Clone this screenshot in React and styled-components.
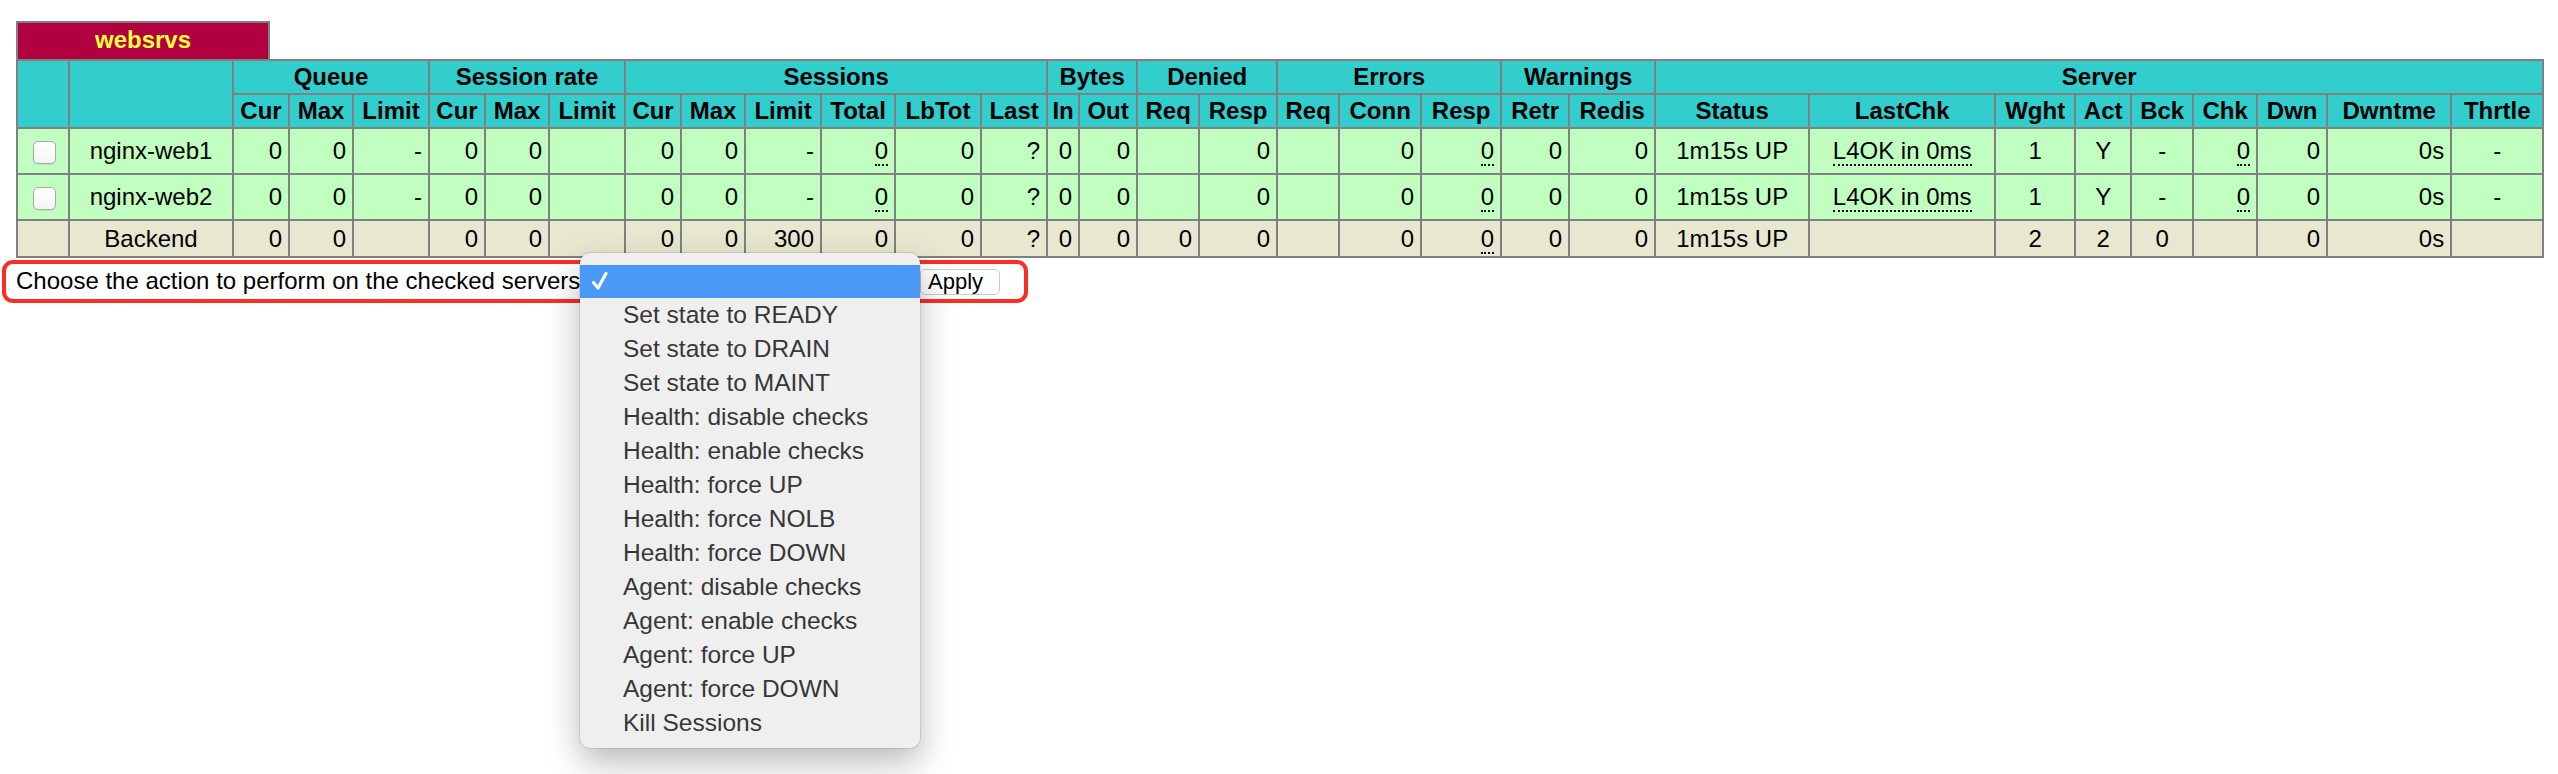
import React from "react";
import styled, { createGlobalStyle } from "styled-components";

const GlobalStyle = createGlobalStyle`
  body {
    margin: 0;
    background: #fff;
    color: #000;
    font-family: "Liberation Sans", Arial, Helvetica, sans-serif;
  }
`;

// column widths measured off the stats page (2x)
const COLS = [52, 164, 56, 64, 76, 56, 64, 76, 56, 64, 76, 74, 86, 66, 32, 58, 62, 78, 62, 82, 80, 68, 86, 154, 186, 80, 56, 62, 64, 70, 124, 92];

// per column alignment, haproxy "ac" cells are centered
const ALIGN = COLS.map((_, i) => {
    if (i <= 1) return "center";
    if ([23, 24, 25, 26, 27, 31].includes(i)) return "center";
    return "right";
});

const GROUPS = [
    { title: "Queue", cols: ["Cur", "Max", "Limit"] },
    { title: "Session rate", cols: ["Cur", "Max", "Limit"] },
    { title: "Sessions", cols: ["Cur", "Max", "Limit", "Total", "LbTot", "Last"] },
    { title: "Bytes", cols: ["In", "Out"] },
    { title: "Denied", cols: ["Req", "Resp"] },
    { title: "Errors", cols: ["Req", "Conn", "Resp"] },
    { title: "Warnings", cols: ["Retr", "Redis"] },
    { title: "Server", cols: ["Status", "LastChk", "Wght", "Act", "Bck", "Chk", "Dwn", "Dwntme", "Thrtle"] }
];

// "_" prefix = value with a dotted underline (tooltip in haproxy)
const serverRow = name => [
    "#check", name,
    "0", "0", "-",
    "0", "0", "",
    "0", "0", "-", "_0", "0", "?",
    "0", "0",
    "", "0",
    "", "0", "_0",
    "0", "0",
    "1m15s UP", "_L4OK in 0ms", "1", "Y", "-", "_0", "0", "0s", "-"
];

const ROWS = [
    { kind: "server", cells: serverRow("nginx-web1") },
    { kind: "server", cells: serverRow("nginx-web2") },
    {
        kind: "backend",
        cells: [
            "", "Backend",
            "0", "0", "",
            "0", "0", "",
            "0", "0", "300", "0", "0", "?",
            "0", "0",
            "0", "0",
            "", "0", "_0",
            "0", "0",
            "1m15s UP", "", "2", "2", "0", "", "0", "0s", ""
        ]
    }
];

const ACTIONS = [
    "Set state to READY",
    "Set state to DRAIN",
    "Set state to MAINT",
    "Health: disable checks",
    "Health: enable checks",
    "Health: force UP",
    "Health: force NOLB",
    "Health: force DOWN",
    "Agent: disable checks",
    "Agent: enable checks",
    "Agent: force UP",
    "Agent: force DOWN",
    "Kill Sessions"
];

const Page = styled.div`
    min-height: 774px;
    box-sizing: border-box;
    padding: 21px 16px 0 16px;
    overflow: hidden;
`;

const ProxyTab = styled.div`
    width: 254px;
    height: 38px;
    box-sizing: border-box;
    border: 2px solid #808080;
    border-bottom: none;
    background: #b00040;
    color: #ffff40;
    font-size: 24px;
    font-weight: bold;
    line-height: 34px;
    text-align: center;
`;

const StatsTable = styled.table`
    width: 2526px;
    table-layout: fixed;
    border-collapse: collapse;
    font-size: 24px;
    line-height: 28px;
`;

const HeadRow = styled.tr`
    height: 34px;
    background: #32cdcd;
`;

const Th = styled.th`
    border: 2px solid #808080;
    padding: 0 4px;
    font-weight: bold;
    text-align: center;
    white-space: nowrap;
    overflow: hidden;
`;

const Row = styled.tr`
    height: ${p => (p.$kind === "backend" ? "37px" : "46px")};
    background: ${p => (p.$kind === "backend" ? "#e8e8d0" : "#c0ffc0")};
`;

const Td = styled.td`
    border: 2px solid #808080;
    padding: 0 6px;
    text-align: ${p => p.$align};
    white-space: nowrap;
    overflow: hidden;
`;

const Dotted = styled.u`
    text-decoration: none;
    border-bottom: 2px dotted #000;
`;

const Check = styled.input.attrs({ type: "checkbox" })`
    appearance: none;
    display: inline-block;
    width: 23px;
    height: 23px;
    margin: 0 0 0 3px;
    vertical-align: middle;
    box-sizing: border-box;
    border: 1px solid #a9a9a9;
    border-radius: 5px;
    background: linear-gradient(#ffffff, #f5f5f5);
    box-shadow: 0 1px 1px rgba(0, 0, 0, 0.08);
`;

const ActionForm = styled.form`
    display: flex;
    align-items: stretch;
    width: 1026px;
    height: 43px;
    box-sizing: border-box;
    margin: 2px 0 0 -14px;
    padding-left: 10px;
    border: 4px solid #fb2d23;
    border-radius: 11px;
`;

const ActionLabel = styled.span`
    flex: none;
    width: 564px;
    padding-top: 3px;
    font-size: 24px;
    line-height: 28px;
    white-space: nowrap;
`;

const SelectWrap = styled.div`
    position: relative;
    flex: none;
    width: 340px;
`;

const ApplyButton = styled.button`
    flex: none;
    align-self: center;
    width: 80px;
    height: 26px;
    margin-top: 1px;
    padding: 0 0 0 7px;
    box-sizing: border-box;
    border: 1px solid #c9c9c9;
    border-radius: 5px;
    background: #fff;
    color: #000;
    font-family: "Liberation Sans", Arial, sans-serif;
    font-size: 22px;
    line-height: 24px;
    text-align: left;
`;

const Menu = styled.ul`
    position: absolute;
    left: 0;
    top: -11px;
    width: 340px;
    margin: 0;
    padding: 12px 0 8px 0;
    list-style: none;
    background: #efefef;
    border-radius: 10px;
    box-shadow: 0 0 0 1px rgba(0, 0, 0, 0.1), 0 14px 34px rgba(0, 0, 0, 0.28);
    z-index: 5;
`;

const MenuItem = styled.li`
    position: relative;
    height: ${p => (p.$selected ? "33px" : "34px")};
    padding-left: 43px;
    background: ${p => (p.$selected ? "#4a99f7" : "transparent")};
    color: ${p => (p.$selected ? "#fff" : "#373737")};
    font-family: "Liberation Sans", Arial, sans-serif;
    font-size: 24.5px;
    line-height: 34px;
    white-space: nowrap;
`;

const Tick = styled.svg`
    position: absolute;
    left: 10px;
    top: 6px;
`;

function Cell ({ value, align }) {
    if (value === "#check") {
        return (
            <Td $align="center">
                <Check />
            </Td>
        );
    }
    if (value.startsWith("_")) {
        return (
            <Td $align={align}>
                <Dotted>{value.slice(1)}</Dotted>
            </Td>
        );
    }
    return <Td $align={align}>{value}</Td>;
}

function ActionMenu () {
    return (
        <Menu>
            <MenuItem $selected>
                <Tick width="20" height="20" viewBox="0 0 20 20">
                    <path d="M3.5 11.5 L8 17 L16 2.5" fill="none" stroke="#fff" strokeWidth="3.2" strokeLinecap="round" strokeLinejoin="round" />
                </Tick>
            </MenuItem>
            {ACTIONS.map(a => (
                <MenuItem key={a}>{a}</MenuItem>
            ))}
        </Menu>
    );
}

export default function App () {
    return (
        <Page>
            <GlobalStyle />
            <ProxyTab>websrvs</ProxyTab>
            <StatsTable>
                <colgroup>
                    {COLS.map((w, i) => (
                        <col key={i} style={{ width: w }} />
                    ))}
                </colgroup>
                <thead>
                    <HeadRow>
                        <Th rowSpan={2} />
                        <Th rowSpan={2} />
                        {GROUPS.map(g => (
                            <Th key={g.title} colSpan={g.cols.length}>
                                {g.title}
                            </Th>
                        ))}
                    </HeadRow>
                    <HeadRow>
                        {GROUPS.map(g => g.cols.map(c => <Th key={g.title + c}>{c}</Th>))}
                    </HeadRow>
                </thead>
                <tbody>
                    {ROWS.map((r, ri) => (
                        <Row key={ri} $kind={r.kind}>
                            {r.cells.map((v, i) => (
                                <Cell key={i} value={v} align={ALIGN[i]} />
                            ))}
                        </Row>
                    ))}
                </tbody>
            </StatsTable>
            <ActionForm onSubmit={e => e.preventDefault()}>
                <ActionLabel>Choose the action to perform on the checked servers</ActionLabel>
                <SelectWrap>
                    <ActionMenu />
                </SelectWrap>
                <ApplyButton type="submit">Apply</ApplyButton>
            </ActionForm>
        </Page>
    );
}
